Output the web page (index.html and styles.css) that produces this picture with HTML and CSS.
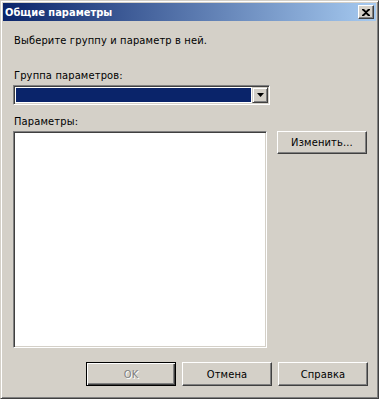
FILE: index.html
```html
<!DOCTYPE html>
<html lang="ru">

<head>
    <meta charset="UTF-8">
    <title>Общие параметры</title>
    <link rel="stylesheet" href="styles.css">
</head>

<body>
    <div class="window">
        <div class="titlebar">
            <span class="title">Общие параметры</span>
            <button class="close-btn" type="button" aria-label="Закрыть">
                <svg width="8" height="7" viewBox="0 0 8 7">
                    <path d="M0,0 h2 l2,2 l2,-2 h2 v1 l-3,2.5 l3,2.5 v1 h-2 l-2,-2 l-2,2 h-2 v-1 l3,-2.5 l-3,-2.5 z" fill="#000" />
                </svg>
            </button>
        </div>
        <div class="content">
            <p class="intro">Выберите группу и параметр в ней.</p>
            <div class="label">Группа параметров:</div>
            <div class="combo">
                <div class="combo-value"></div>
                <span class="combo-btn">
                    <svg width="7" height="4" viewBox="0 0 7 4">
                        <path d="M0,0 h7 l-3.5,4 z" fill="#000" />
                    </svg>
                </span>
            </div>
            <div class="label label-params">Параметры:</div>
            <div class="params">
                <div class="listbox"></div>
                <button class="btn btn-edit" type="button">Изменить...</button>
            </div>
            <div class="actions">
                <button class="btn btn-default" type="button" disabled>OK</button>
                <button class="btn" type="button">Отмена</button>
                <button class="btn" type="button">Справка</button>
            </div>
        </div>
    </div>
</body>

</html>
```

FILE: styles.css
```css
body {
    margin: 0;
    background-color: #d4d0c8;
    font-family: "DejaVu Sans Condensed", "DejaVu Sans", sans-serif;
    font-size: 11px;
    color: #000;
}

.window {
    box-sizing: border-box;
    width: 379px;
    height: 399px;
    padding: 2px;
    background-color: #d4d0c8;
    border: 1px solid;
    border-color: #d4d0c8 #404040 #404040 #d4d0c8;
    box-shadow: inset 1px 1px #fff, inset -1px -1px #808080;
}

/* заголовок окна */
.titlebar {
    display: flex;
    align-items: center;
    justify-content: space-between;
    height: 18px;
    padding: 0 2px 0 2px;
    background: linear-gradient(to right, #0a246a, #a6caf0);
}

.title {
    color: #fff;
    font-weight: bold;
    font-size: 11px;
    line-height: 13px;
}

.close-btn {
    display: flex;
    align-items: center;
    justify-content: center;
    box-sizing: border-box;
    width: 16px;
    height: 14px;
    padding: 0;
    background-color: #d4d0c8;
    border: 1px solid;
    border-color: #fff #404040 #404040 #fff;
    box-shadow: inset -1px -1px #808080;
}

.content {
    padding: 0 0 0 10px;
    letter-spacing: 0.15px;
}

.intro {
    margin: 13px 0 0 1px;
    line-height: 13px;
}

.label {
    margin: 22px 0 3px 1px;
    line-height: 13px;
}

.label-params {
    margin-top: 10px;
}

/* выпадающий список */
.combo {
    display: flex;
    box-sizing: border-box;
    width: 257px;
    height: 20px;
    padding: 1px;
    background-color: #fff;
    border: 1px solid;
    border-color: #808080 #fff #fff #808080;
    box-shadow: inset 1px 1px #404040, inset -1px -1px #d4d0c8;
}

.combo-value {
    flex: 1;
    margin: 1px;
    background-color: #0a246a;
}

.combo-btn {
    display: flex;
    align-items: center;
    justify-content: center;
    box-sizing: border-box;
    width: 16px;
    height: 16px;
    background-color: #d4d0c8;
    border: 1px solid;
    border-color: #d4d0c8 #404040 #404040 #d4d0c8;
    box-shadow: inset 1px 1px #fff, inset -1px -1px #808080;
}

.params {
    display: flex;
    align-items: flex-start;
    gap: 10px;
}

.listbox {
    box-sizing: border-box;
    width: 254px;
    height: 217px;
    background-color: #fff;
    border: 1px solid;
    border-color: #808080 #fff #fff #808080;
    box-shadow: inset 1px 1px #404040, inset -1px -1px #d4d0c8;
}

/* кнопки */
.btn {
    box-sizing: border-box;
    width: 90px;
    height: 24px;
    padding: 0;
    font-family: inherit;
    font-size: 11px;
    letter-spacing: inherit;
    color: #000;
    background-color: #d4d0c8;
    border: 1px solid;
    border-color: #fff #404040 #404040 #fff;
    box-shadow: inset -1px -1px #808080;
}

.btn-edit {
    height: 23px;
}

.btn-default {
    border-color: #000;
    box-shadow: inset 1px 1px #fff, inset -1px -1px #404040, inset -2px -2px #808080;
}

.btn:disabled {
    color: #808080;
    text-shadow: 1px 1px #fff;
}

.actions {
    display: flex;
    justify-content: flex-end;
    gap: 6px;
    margin: 14px 8px 0 0;
}
```
